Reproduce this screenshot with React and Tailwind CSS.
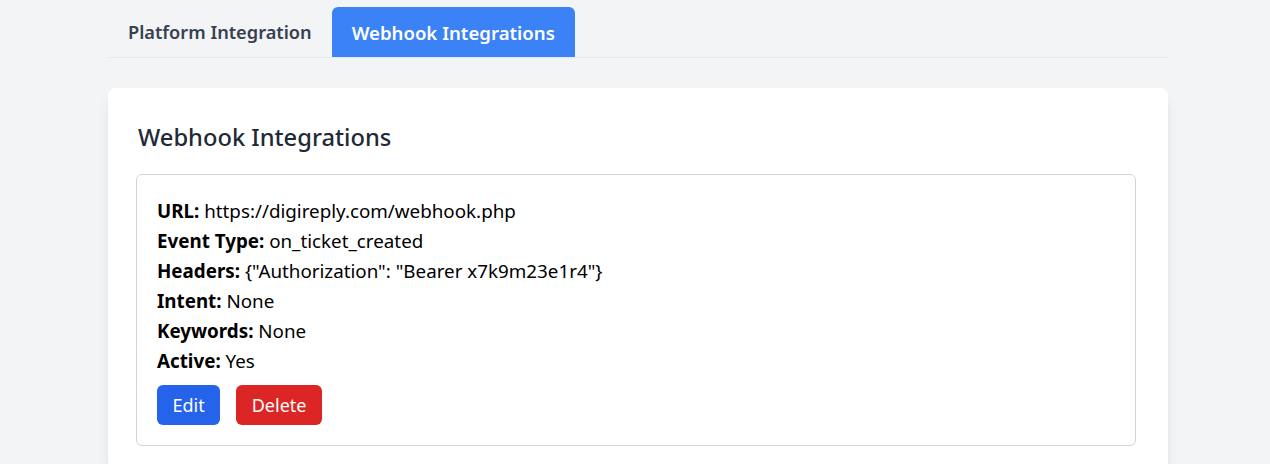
export default function App() {
  const rows = [
    { label: "URL:", value: "https://digireply.com/webhook.php" },
    { label: "Event Type:", value: "on_ticket_created" },
    { label: "Headers:", value: '{"Authorization": "Bearer x7k9m23e1r4"}' },
    { label: "Intent:", value: "None" },
    { label: "Keywords:", value: "None" },
    { label: "Active:", value: "Yes" },
  ];

  return (
    <div
      className="min-h-[464px] bg-[#f3f4f6] pt-[7px]"
      style={{ fontFamily: '"Noto Sans", "Open Sans", sans-serif' }}
    >
      <div className="ml-[108px] w-[1060px]">
        <div className="flex border-b border-[#e5e7eb]">
          <button className="h-[50px] px-5 pt-[2px] text-[18.2px] font-semibold text-[#374151]">
            Platform Integration
          </button>
          <button className="h-[50px] px-5 pt-[2px] text-[18.6px] font-semibold text-white bg-[#3b82f6] rounded-t-md">
            Webhook Integrations
          </button>
        </div>

        <div className="mt-[30px] bg-white rounded-lg shadow-lg pl-[28px] pr-[32px] pt-[33px] pb-6">
          <h2 className="text-[23.7px] leading-8 font-medium text-[#1f2937] pl-[2px] mb-[21px]">
            Webhook Integrations
          </h2>
          <div className="border border-[#d1d5db] rounded-md px-5 pt-[21px] pb-[20px]">
            {rows.map((r) => (
              <p key={r.label} className="text-[18.8px] leading-[30px] text-black">
                <span className="font-bold">{r.label}</span> {r.value}
              </p>
            ))}
            <div className="flex gap-4 mt-[9px]">
              <button className="h-10 px-[15.5px] rounded-md bg-[#2563eb] text-white text-[18px]">
                Edit
              </button>
              <button className="h-10 px-[15.5px] rounded-md bg-[#dc2626] text-white text-[18px]">
                Delete
              </button>
            </div>
          </div>
        </div>
      </div>
    </div>
  );
}
